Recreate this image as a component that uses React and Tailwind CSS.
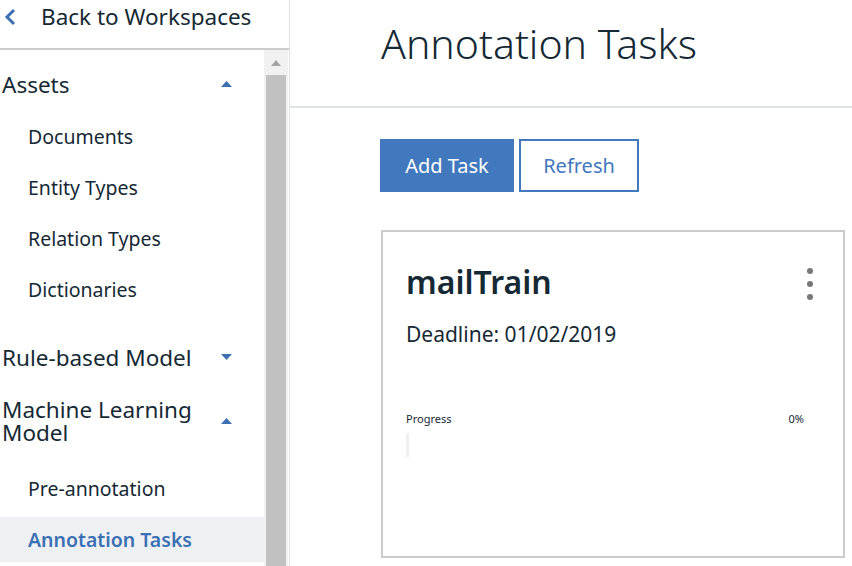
import React from 'react';

const font = { fontFamily: '"Noto Sans", "Open Sans", sans-serif' };

function Caret({ up }) {
  return (
    <svg width="11" height="6" viewBox="0 0 11 6" className="text-[#3d70b2]">
      {up ? <polygon points="0,6 5.5,0 11,6" fill="currentColor" /> : <polygon points="0,0 5.5,6 11,0" fill="currentColor" />}
    </svg>
  );
}

function SectionHeader({ children, up, className }) {
  return (
    <div className={`flex items-center justify-between pl-[2px] pr-[32px] text-[22.5px] text-[#152935] ${className}`}>
      <span className="leading-[23px]">{children}</span>
      <Caret up={up} />
    </div>
  );
}

function NavItem({ label, active }) {
  return (
    <div
      className={`flex items-center h-[45px] mb-[6px] pl-[28px] text-[19.5px] ${
        active ? 'bg-[#eef1f4] text-[#3d70b2] font-semibold' : 'text-[#152935]'
      }`}
    >
      {label}
    </div>
  );
}

export default function App() {
  return (
    <div className="flex w-[852px] h-[566px] overflow-hidden bg-white" style={font}>
      <aside className="flex flex-col w-[290px] shrink-0 border-r border-[#e0e0e0]">
        <div className="flex items-center h-[50px] shrink-0 border-b-2 border-[#cccccc] pb-[14px]">
          <svg width="14" height="18" viewBox="0 0 14 18" className="ml-[3px] mr-[24px]">
            <polyline points="11,2 4,9 11,16" fill="none" stroke="#3d70b2" strokeWidth="3" />
          </svg>
          <span className="text-[22.5px] text-[#152935]">Back to Workspaces</span>
        </div>
        <div className="flex flex-1 min-h-0">
          <nav className="w-[264px] shrink-0 pt-[8px]">
            <SectionHeader up className="h-[52px]">Assets</SectionHeader>
            <div className="mt-[4px]">
              <NavItem label="Documents" />
              <NavItem label="Entity Types" />
              <NavItem label="Relation Types" />
              <NavItem label="Dictionaries" />
            </div>
            <SectionHeader className="h-[52px] mt-[19px]">Rule-based Model</SectionHeader>
            <SectionHeader up className="h-[46px] mt-[15px]">
              Machine Learning
              <br />
              Model
            </SectionHeader>
            <div className="mt-[22px]">
              <NavItem label="Pre-annotation" />
              <NavItem label="Annotation Tasks" active />
            </div>
          </nav>
          <div className="flex flex-col w-[24px] bg-[#f1f1f1] px-[2px]">
            <div className="flex items-center justify-center h-[25px]">
              <svg width="10" height="6" viewBox="0 0 10 6">
                <polygon points="0,6 5,0 10,6" fill="#a3a3a3" />
              </svg>
            </div>
            <div className="flex-1 bg-[#c1c1c1]" />
          </div>
        </div>
      </aside>

      <main className="flex-1 flex flex-col">
        <header className="h-[108px] shrink-0 border-b-2 border-[#dfe3e6] pl-[91px] pt-[15px]">
          <h1 className="text-[41px] font-light text-[#152935] leading-[56px]">Annotation Tasks</h1>
        </header>
        <div className="pl-[90px] pt-[31px]">
          <div className="flex gap-[5px]">
            <button className="w-[134px] h-[53px] bg-[#4178be] text-white text-[20px]">Add Task</button>
            <button className="w-[120px] h-[53px] border-2 border-[#4178be] text-[#4178be] text-[20px]">Refresh</button>
          </div>
          <div className="mt-[38px] ml-[1px] w-[464px] h-[328px] border-2 border-[#cccccc] pl-[23px] pr-[30px] pt-[28px]">
            <div className="flex items-start justify-between">
              <h2 className="text-[32px] font-semibold text-[#152935] leading-[44px]">mailTrain</h2>
              <div className="flex flex-col gap-[7px] pt-[8px]">
                <span className="w-[6px] h-[6px] rounded-full bg-[#777777]" />
                <span className="w-[6px] h-[6px] rounded-full bg-[#777777]" />
                <span className="w-[6px] h-[6px] rounded-full bg-[#777777]" />
              </div>
            </div>
            <div className="mt-[16px] text-[21px] text-[#152935] leading-[28px]">Deadline: 01/02/2019</div>
            <div className="mt-[64px] flex justify-between pr-[9px] text-[11px] text-[#152935] leading-[14px]">
              <span>Progress</span>
              <span>0%</span>
            </div>
            <div className="mt-[7px] w-[3px] h-[24px] bg-[#f0f0f0]" />
          </div>
        </div>
      </main>
    </div>
  );
}
